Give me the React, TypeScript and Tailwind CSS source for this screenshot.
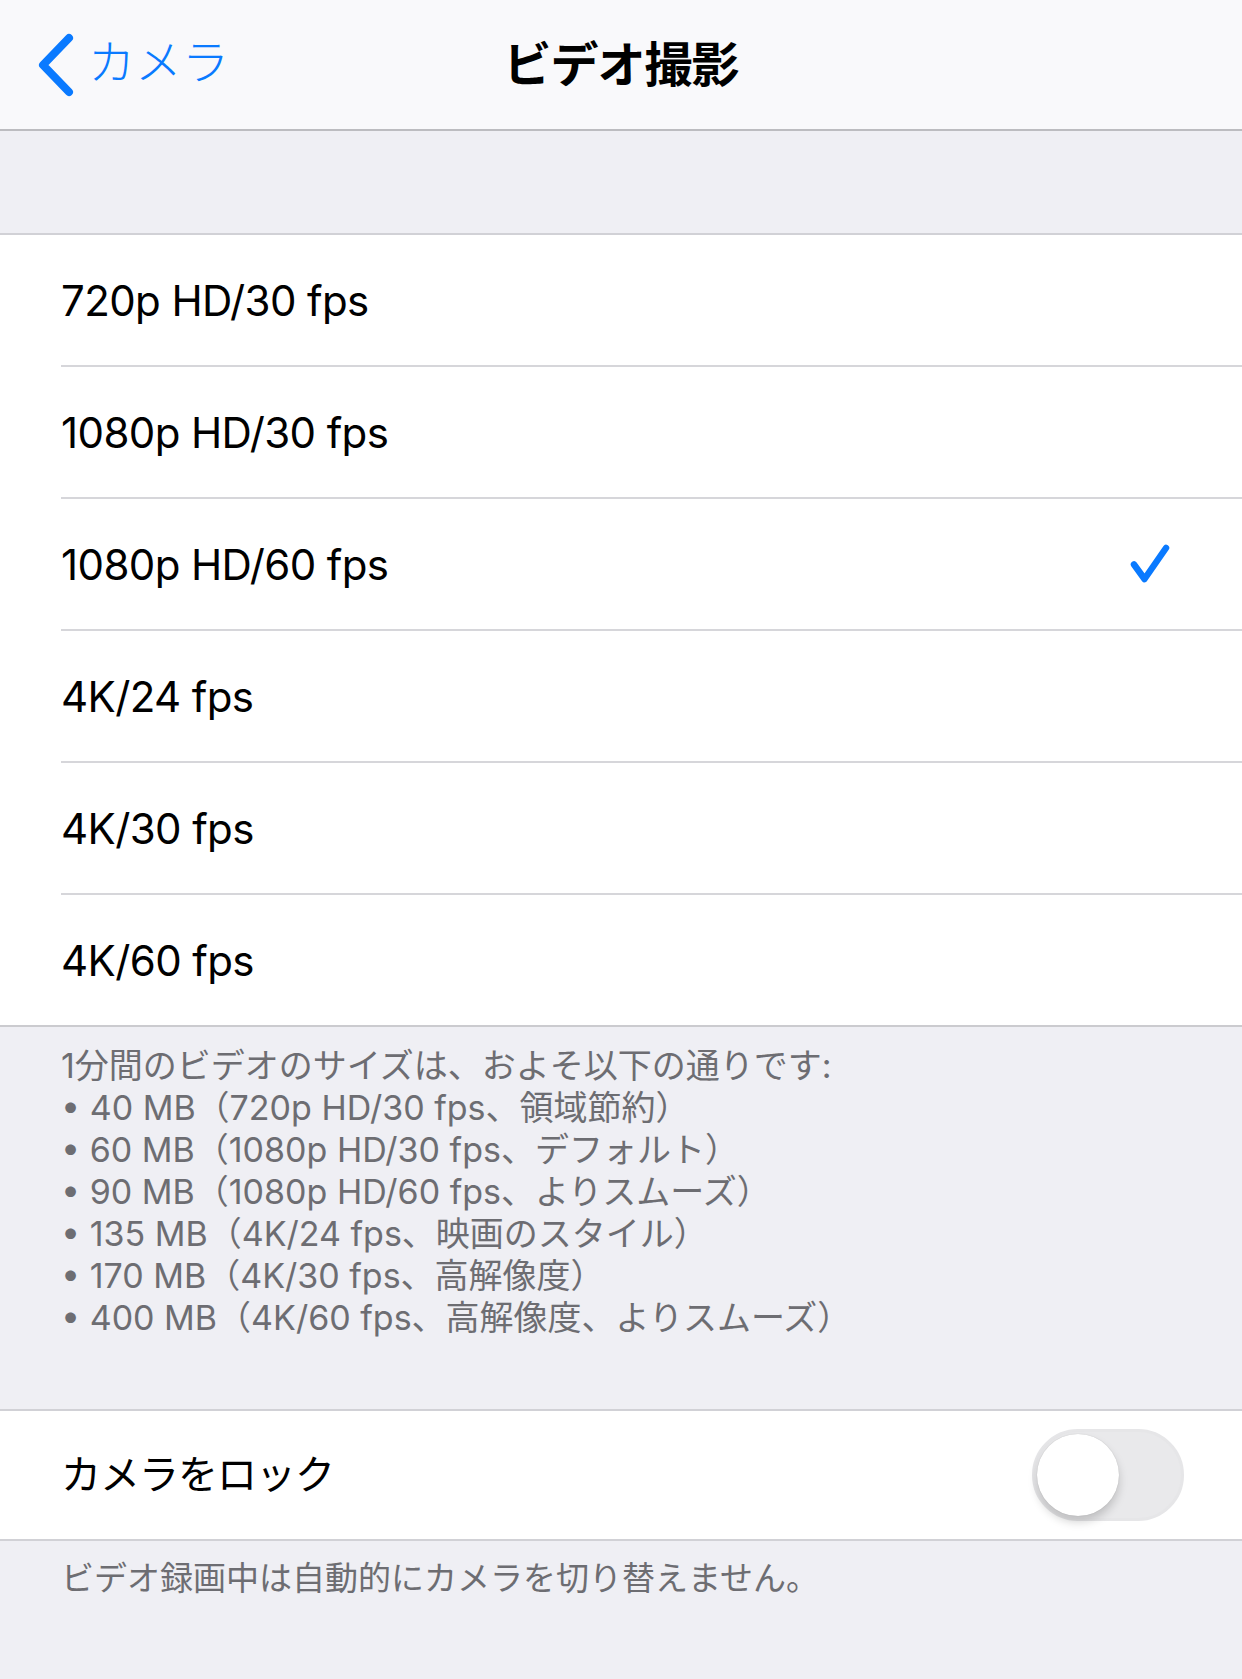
import React from "react";

const options = [
  "720p HD/30 fps",
  "1080p HD/30 fps",
  "1080p HD/60 fps",
  "4K/24 fps",
  "4K/30 fps",
  "4K/60 fps",
];

const selected_index = 2;

const size_lines = [
  "1分間のビデオのサイズは、およそ以下の通りです:",
  "• 40 MB（720p HD/30 fps、領域節約）",
  "• 60 MB（1080p HD/30 fps、デフォルト）",
  "• 90 MB（1080p HD/60 fps、よりスムーズ）",
  "• 135 MB（4K/24 fps、映画のスタイル）",
  "• 170 MB（4K/30 fps、高解像度）",
  "• 400 MB（4K/60 fps、高解像度、よりスムーズ）",
];

function ChevronLeft() {
  return (
    <svg viewBox="0 0 40 64" className="h-[64px] w-[40px]" fill="none" stroke="#0a7aff" strokeWidth="8" strokeLinecap="round" strokeLinejoin="round">
      <path d="M33 5 7 32l26 27" />
    </svg>
  );
}

function CheckMark() {
  return (
    <svg viewBox="0 0 40 40" className="h-[40px] w-[40px]" fill="none" stroke="#0a7aff" strokeWidth="6.5" strokeLinecap="round" strokeLinejoin="round">
      <path d="M4 20.5 14.5 35 36 4" />
    </svg>
  );
}

function Toggle() {
  return (
    <div className="relative h-[92px] w-[152px] rounded-full border-[3px] border-[#e6e6e8] bg-[#e9e9eb]">
      <div className="absolute left-[2px] top-[2px] h-[82px] w-[82px] rounded-full bg-white shadow-[0_6px_10px_rgba(0,0,0,0.18),0_0_1px_rgba(0,0,0,0.2)]" />
    </div>
  );
}

export default function App() {
  return (
    <div className="min-h-[1679px] bg-[#efeff4] font-[Inter,'Noto_Sans_CJK_JP',sans-serif] antialiased">
      <div className="grid h-[131px] grid-cols-[1fr_auto_1fr] items-center border-b-2 border-[#bcbcc0] bg-[#f9f9fb]">
        <div className="flex items-center gap-[12px] pl-[36px]">
          <ChevronLeft />
          <span className="pb-[4px] text-[47px] font-light text-[#0a7aff]">カメラ</span>
        </div>
        <div className="text-[48px] font-bold tracking-[-1px] text-black">ビデオ撮影</div>
        <div />
      </div>

      <div className="h-[104px] border-b-2 border-[#d1d1d6]" />

      <div className="border-b-2 border-[#cbcbcf] bg-white">
        {options.map((option, index) => (
          <div key={option} className="pl-[61px]">
            <div
              className={
                index === options.length - 1
                  ? "flex h-[130px] items-center justify-between pr-[72px]"
                  : "flex h-[132px] items-center justify-between border-b-2 border-[#d6d6da] pr-[72px]"
              }
            >
              <span className="text-[42px] tracking-[-0.6px] text-black">{option}</span>
              {index === selected_index ? <CheckMark /> : null}
            </div>
          </div>
        ))}
      </div>

      <div className="border-b-2 border-[#d1d1d6] pb-[70px] pl-[61px] pt-[18px] text-[34px] leading-[42px] text-[#6d6d72]">
        {size_lines.map((line) => (
          <div key={line}>{line}</div>
        ))}
      </div>

      <div className="flex h-[130px] items-center justify-between border-b-2 border-[#d1d1d6] bg-white pl-[61px] pr-[58px]">
        <span className="text-[40px] tracking-[-1px] text-black">カメラをロック</span>
        <Toggle />
      </div>

      <div className="pl-[61px] pt-[16px] text-[33px] leading-[42px] text-[#6d6d72]">
        ビデオ録画中は自動的にカメラを切り替えません。
      </div>
    </div>
  );
}
